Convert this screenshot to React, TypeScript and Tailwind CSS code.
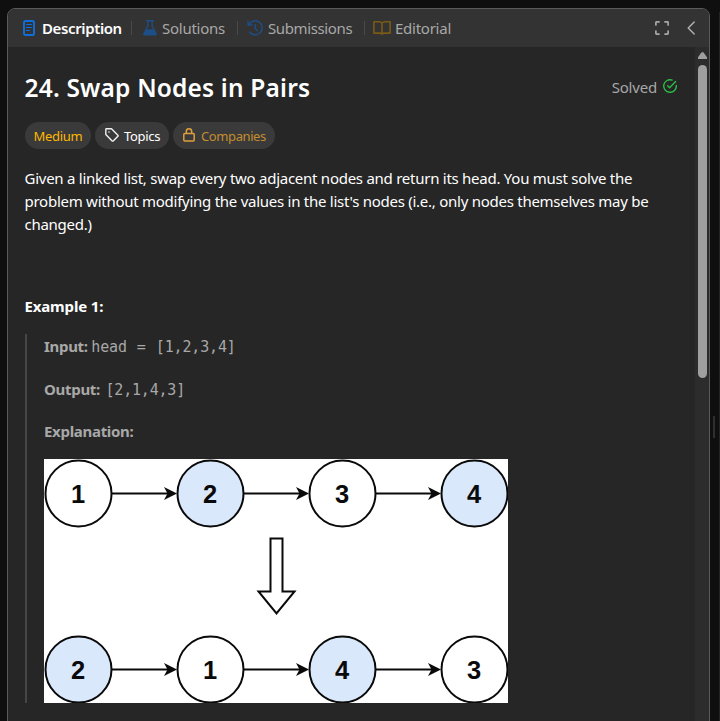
import type { ReactNode } from "react";

function Divider() {
  return <div className="h-[14px] w-px shrink-0 bg-[#4a4a4a]" />;
}

function DescriptionIcon() {
  return (
    <svg className="h-4 w-3 shrink-0" viewBox="0 0 12 16" fill="none" stroke="#0f6fdc">
      <rect x="1" y="1" width="10" height="14" rx="1.6" strokeWidth="1.9" />
      <path d="M3.500 4.500h5M3.500 7.500h5M3.500 10.500h3" strokeWidth="1.2" strokeLinecap="round" />
    </svg>
  );
}

function FlaskIcon() {
  return (
    <svg className="h-4 w-[14px] shrink-0" viewBox="0 0 14 16">
      <path d="M3.600.8h6.800M4.900 1v5L2.600 10M9.100 1v5l2.300 4" fill="none" stroke="#1d4e86" strokeWidth="1.400" strokeLinecap="round" />
      <path d="M2.800 9.200h8.400l2.400 3.900c.6 1.200-.1 2.400-1.400 2.400H1.800c-1.300 0-2-1.200-1.400-2.400z" fill="#1d4e86" />
    </svg>
  );
}

function HistoryIcon() {
  return (
    <svg className="h-4 w-4 shrink-0" viewBox="0 0 16 16" fill="none" stroke="#1d4e86" strokeWidth="1.500" strokeLinecap="round" strokeLinejoin="round">
      <path d="M1.900 4.700A7 7 0 1 1 2.500 12" />
      <path d="M.9 1.300l.4 3.800 3.800-.3" />
      <path d="M8.300 4.800v3.600l2 2.100" />
    </svg>
  );
}

function BookIcon() {
  return (
    <svg className="h-[14px] w-[18px] shrink-0" viewBox="0 0 18 14" fill="none" stroke="#7a5b16" strokeWidth="1.600" strokeLinejoin="round">
      <path d="M9 2.200C8.300 1.200 7.400.8 6.300.8H.9v11.300h5.600c1.200 0 2 .3 2.500 1.100.5-.8 1.300-1.100 2.500-1.100h5.600V.8h-5.400C10.600.8 9.700 1.200 9 2.200zV13" />
    </svg>
  );
}

function ExpandIcon() {
  return (
    <svg className="h-[14px] w-[14px]" viewBox="0 0 14 14" fill="none" stroke="#a8a8a8" strokeWidth="1.700" strokeLinecap="round" strokeLinejoin="round">
      <path d="M.9 4V1.500Q.9.9 1.500.9H4M10 .9h2.500q.6 0 .6.6V4M13.100 10v2.500q0 .6-.6.6H10M4 13.100H1.500q-.6 0-.6-.6V10" />
    </svg>
  );
}

function Chip({ children, className }: { children: ReactNode; className: string }) {
  return (
    <div className={`flex h-[27px] shrink-0 items-center rounded-full bg-[#3a3a3a] pt-px text-[13px] leading-[26px] whitespace-nowrap ${className}`}>
      {children}
    </div>
  );
}

function Node({ x, y, label, tinted }: { x: number; y: number; label: string; tinted?: boolean }) {
  return (
    <g>
      <circle cx={x} cy={y} r="33" fill={tinted ? "#dae8fc" : "#fff"} stroke="#0a0a0a" strokeWidth="2" />
      <text x={x - 0.5} y={y + 9} textAnchor="middle" fontSize="25.500" fontWeight="700" fill="#0a0a0a">
        {label}
      </text>
    </g>
  );
}

function Arrow({ x, y }: { x: number; y: number }) {
  return (
    <g>
      <path d={`M${x} ${y}h58`} stroke="#0a0a0a" strokeWidth="2" />
      <path d={`M${x + 65} ${y}l-13 -6.500l3.500 6.500l-3.500 6.500z`} fill="#0a0a0a" />
    </g>
  );
}

const columns = [34.5, 166.5, 298.5, 430.5];

function Diagram() {
  const rows = [
    { y: 34.5, labels: ["1", "2", "3", "4"], tints: [1, 3] },
    { y: 210.5, labels: ["2", "1", "4", "3"], tints: [0, 2] },
  ];
  return (
    <svg className="block h-[244px] w-[464px] bg-white font-['Liberation_Sans',sans-serif] tracking-normal" viewBox="0 0 464 244">
      {rows.map((row) => (
        <g key={row.y}>
          {columns.slice(0, 3).map((x) => (
            <Arrow key={x} x={x + 33.5} y={row.y} />
          ))}
          {columns.map((x, i) => (
            <Node key={x} x={x} y={row.y} label={row.labels[i]} tinted={row.tints.includes(i)} />
          ))}
        </g>
      ))}
      <path d="M226.500 79.500h12v53h12l-18 22l-18 -22h12z" fill="#fff" stroke="#0a0a0a" strokeWidth="2" />
    </svg>
  );
}

export default function App() {
  return (
    <div className="flex h-[721px] w-[720px] overflow-hidden bg-[#0f0f0f] pt-2 pl-[7px] font-['Noto_Sans',sans-serif] text-white">
      <div className="flex h-[730px] w-[703px] shrink-0 flex-col overflow-hidden rounded-t-lg border border-[#5a5a5a] bg-[#262626]">
        <header className="flex h-[38px] shrink-0 items-center bg-[#333333] pl-[15px] text-[15px] leading-5 whitespace-nowrap text-[#a8a8a8]">
          <div className="flex w-[108px] shrink-0 items-center gap-[7px]">
            <DescriptionIcon />
            <span className="font-semibold tracking-[-0.38px] text-white">Description</span>
          </div>
          <Divider />
          <div className="flex w-[105px] shrink-0 items-center gap-[5px] pl-[11px]">
            <FlaskIcon />
            <span className="tracking-[-0.25px]">Solutions</span>
          </div>
          <Divider />
          <div className="flex w-[126px] shrink-0 items-center gap-[5px] pl-[9px]">
            <HistoryIcon />
            <span className="tracking-[-0.38px]">Submissions</span>
          </div>
          <Divider />
          <div className="flex shrink-0 items-center gap-1 pl-2">
            <BookIcon />
            <span className="tracking-[-0.25px]">Editorial</span>
          </div>
          <div className="ml-auto flex shrink-0 items-center gap-[18px] pr-[13px]">
            <ExpandIcon />
            <svg className="h-[14px] w-[9px]" viewBox="0 0 9 14" fill="none" stroke="#b0b0b0" strokeWidth="1.400" strokeLinecap="round" strokeLinejoin="round">
              <path d="M7.200 1L1.200 7l6 6" />
            </svg>
          </div>
        </header>
        <div className="flex min-h-0 grow">
          <main className="w-[687px] shrink-0 pl-[17px]">
            <div className="flex h-[75px] items-center justify-between pr-[18px]">
              <h1 className="-ml-[0.5px] pt-[6px] text-[24.5px] leading-8 font-semibold tracking-[0.18px] whitespace-nowrap">24. Swap Nodes in Pairs</h1>
              <div className="flex items-center gap-[6px] pt-1 text-[15px] leading-5 text-[#a8a8a8]">
                <span className="tracking-[-0.2px]">Solved</span>
                <svg className="-mt-px h-[14px] w-[14px]" viewBox="0 0 14 14" fill="none" stroke="#2cbb47" strokeWidth="1.400" strokeLinecap="round" strokeLinejoin="round">
                  <path d="M9.200 1.100A6.300 6.300 0 1 0 13.300 6.500" />
                  <path d="M4.600 6.800l2 2 6-6.300" />
                </svg>
              </div>
            </div>
            <div className="flex gap-1">
              <Chip className="w-[66px] justify-center tracking-[-0.3px] text-[#ffb800]">Medium</Chip>
              <Chip className="w-[74px] gap-[5px] pl-[10px] tracking-[-0.3px]">
                <svg className="-mt-0.5 h-[14px] w-[14px]" viewBox="0 0 14 14" fill="none" stroke="#f0f0f0" strokeWidth="1.400" strokeLinejoin="round">
                  <path d="M.8 1.500Q.8.8 1.500.8h5l6.400 6.400q.5.500 0 1l-4.700 4.700q-.5.500-1 0L.8 6.500z" />
                  <circle cx="4" cy="4" r=".8" fill="#f0f0f0" stroke="none" />
                </svg>
                <span>Topics</span>
              </Chip>
              <Chip className="w-[102px] gap-[6px] pl-[10px] tracking-[-0.4px] text-[#c48d2f]">
                <svg className="-mt-0.5 h-[14px] w-3" viewBox="0 0 12 14" fill="none" stroke="#e0a03c" strokeWidth="1.500" strokeLinejoin="round">
                  <rect x=".8" y="5.500" width="10.400" height="7.500" rx="1" />
                  <path d="M3.300 5.500V3.500a2.700 2.700 0 0 1 5.400 0v2" />
                </svg>
                <span>Companies</span>
              </Chip>
            </div>
            <div className="-ml-[0.5px] pt-[18px] text-[15px] leading-[23px] tracking-[-0.26px] whitespace-nowrap">
              <p>Given a linked list, swap every two adjacent nodes and return its head. You must solve the</p>
              <p>problem without modifying the values in the list's nodes (i.e., only nodes themselves may be</p>
              <p>changed.)</p>
            </div>
            <h2 className="-ml-[0.5px] pt-[59px] text-[15px] leading-[23px] font-bold tracking-[-0.15px]">Example 1:</h2>
            <section className="mt-4 h-[369px] border-l-2 border-[#464646] pt-px pl-[17px] text-[15px] leading-[23px] tracking-[-0.3px] whitespace-nowrap text-[#a8a8a8]">
              <p className="flex h-[43px] items-baseline gap-[3.5px]">
                <strong>Input:</strong>
                <span className="font-['DejaVu_Sans_Mono',monospace] tracking-[-0.15px] [word-spacing:1.2px] whitespace-pre">head = [1,2,3,4]</span>
              </p>
              <p className="flex h-[42px] items-baseline gap-[5.5px]">
                <strong>Output:</strong>
                <span className="font-['DejaVu_Sans_Mono',monospace] tracking-[-0.2px]">[2,1,4,3]</span>
              </p>
              <p className="h-[39px]">
                <strong>Explanation:</strong>
              </p>
              <Diagram />
            </section>
          </main>
          <div className="flex grow flex-col items-center bg-[#2c2c2c] pt-[5px]">
            <svg className="h-[7px] w-[9px]" viewBox="0 0 9 7">
              <path d="M3.600.2h1.800L9 5.200V7H0V5.200z" fill="#9f9f9f" />
            </svg>
            <div className="mt-[6px] h-[313px] w-[9px] rounded-full bg-[#9f9f9f]" />
          </div>
        </div>
      </div>
      <div className="w-[9px] shrink-0 pt-[408px] pl-[3px]">
        <div className="h-[22px] w-[2px] bg-[#2e2e2e]" />
      </div>
      <div className="mt-1 h-[720px] w-px shrink-0 bg-[#242424]" />
    </div>
  );
}
